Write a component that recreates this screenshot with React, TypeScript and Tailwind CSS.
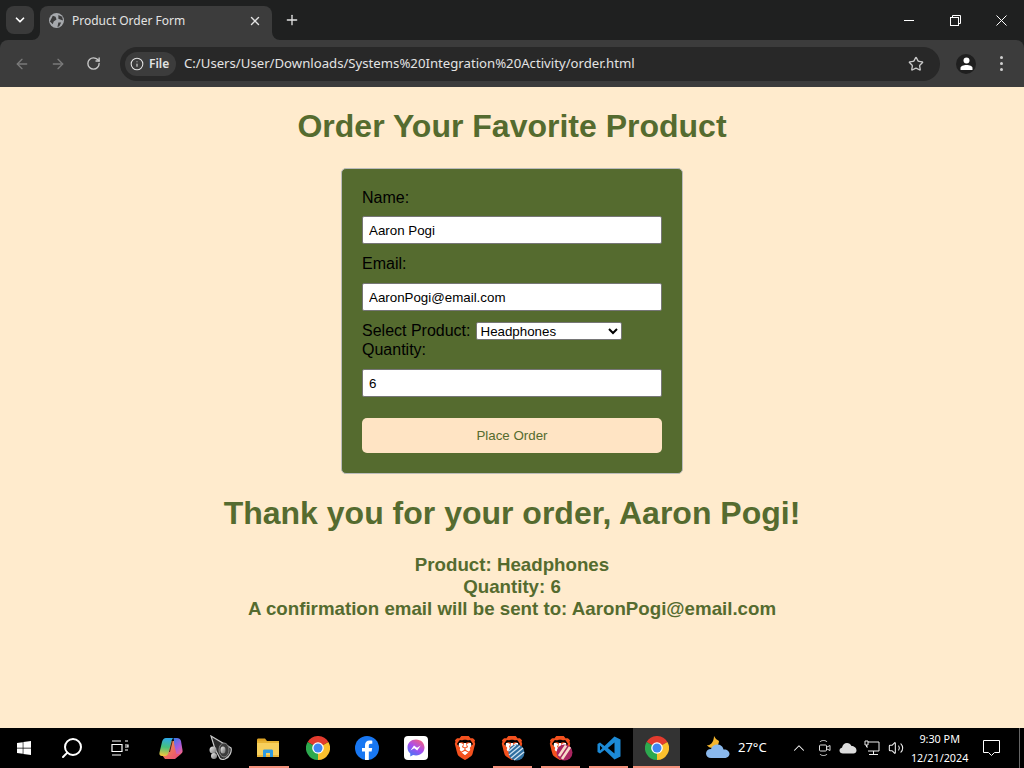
import React from "react";
import { SiBrave } from "react-icons/si";
import { FaWindows } from "react-icons/fa";
import { Star, ArrowLeft, ArrowRight, RotateCw, Info, ChevronDown, Plus, X, Search, ChevronUp, Volume2 } from "lucide-react";

function VSCode() {
  return (
    <svg width="24" height="24" viewBox="0 0 24 24">
      <path d="M17.500 0.500L23.500 3.500V20.500L17.500 23.500L7.500 14L3 17.500L0.500 16V8L3 6.500L7.500 10ZM17.500 6.500L10.800 12L17.500 17.500ZM3 9.500V14.500L5.500 12Z" fill="#1c8ad6" fillRule="evenodd" />
    </svg>
  );
}

function Chrome({ size = 24 }: { size?: number }) {
  return (
    <svg width={size} height={size} viewBox="0 0 24 24">
      <path d="M12 12L1.6 6A12 12 0 0 1 22.4 6Z" fill="#e33b2e" />
      <path d="M12 12L22.4 6A12 12 0 0 1 12 24Z" fill="#fbc02d" />
      <path d="M12 12L12 24A12 12 0 0 1 1.6 6Z" fill="#2da94f" />
      <circle cx="12" cy="12" r="5.8" fill="#fff" />
      <circle cx="12" cy="12" r="4.5" fill="#3f86f4" />
    </svg>
  );
}

function Brave({ badge }: { badge?: "blue" | "pink" }) {
  return (
    <div className="relative w-6 h-6">
      <svg viewBox="0 0 24 24" width="24" height="24" className="absolute inset-0">
        <path d="M6 7h12l1 7-7 7-7-7z" fill="#fff" />
      </svg>
      <SiBrave size={24} color="#f4511e" className="absolute inset-0" />
      {badge === "blue" && (
        <svg width="17" height="17" viewBox="0 0 17 17" className="absolute left-[8px] top-[8px]">
          <circle cx="8.5" cy="8.5" r="8" fill="#2f6f9f" />
          <path d="M1 7l7-6M1 11l11-9M3 14L15 4M6 16l10-8" stroke="#cfe3f2" strokeWidth="1.3" />
        </svg>
      )}
      {badge === "pink" && (
        <svg width="17" height="17" viewBox="0 0 17 17" className="absolute left-[8px] top-[8px]">
          <circle cx="8.5" cy="8.5" r="8" fill="#a8255f" />
          <path d="M3 12L10 1.5M6 15L14 3" stroke="#f6dbc8" strokeWidth="2.6" />
        </svg>
      )}
    </div>
  );
}

function Copilot() {
  return (
    <svg width="24" height="24" viewBox="0 0 24 24">
      <defs>
        <linearGradient id="cpa" x1="0.4" y1="0" x2="0.3" y2="1">
          <stop offset="0" stopColor="#2fa8e8" />
          <stop offset="0.5" stopColor="#46c07a" />
          <stop offset="1" stopColor="#f6c63c" />
        </linearGradient>
        <linearGradient id="cpb" x1="0.2" y1="0" x2="0.8" y2="1">
          <stop offset="0" stopColor="#3d7be8" />
          <stop offset="0.55" stopColor="#a65be0" />
          <stop offset="1" stopColor="#f0648c" />
        </linearGradient>
        <linearGradient id="cpc" x1="0" y1="0" x2="1" y2="1">
          <stop offset="0" stopColor="#f6a03c" />
          <stop offset="1" stopColor="#e8447c" />
        </linearGradient>
      </defs>
      <path d="M6 5H20L22 18L16 23H6L3 19Z" fill="url(#cpc)" />
      <path d="M7 2h7c-1 1.500-1.500 3-2 5l-2.500 9.500c-.5 2-1.500 3.500-3.500 3.500H3c-2 0-3-1.500-2.500-3.500L3 6C3.800 3.500 5 2 7 2z" fill="url(#cpa)" />
      <path d="M14 2h4c2 0 3.500 1 4 3l1.500 9c.5 2-.5 4-3 4h-3l-2-8c-.5-2-.5-6-1-8z" fill="url(#cpb)" />
      <path d="M13.500 4L10.500 16" stroke="#111" strokeWidth="0.8" />
    </svg>
  );
}

function Speaker() {
  return (
    <svg width="26" height="26" viewBox="0 0 26 26">
      <defs>
        <linearGradient id="spk" x1="0" y1="0" x2="1" y2="1">
          <stop offset="0" stopColor="#f0f0f0" />
          <stop offset="1" stopColor="#6e6e6e" />
        </linearGradient>
      </defs>
      <path d="M4 1l20 12c1 3-1 9-6 11-2 .7-4 .5-5-.5L8 14z" fill="#2b2b2b" stroke="#c9c9c9" strokeWidth="1.2" />
      <ellipse cx="17" cy="15" rx="5" ry="7" fill="#3c3c3c" stroke="#8a8a8a" />
      <ellipse cx="16" cy="15" rx="2.500" ry="3.500" fill="url(#spk)" />
      <circle cx="6" cy="15" r="3.500" fill="url(#spk)" />
      <circle cx="7" cy="21" r="3" fill="url(#spk)" />
    </svg>
  );
}

function Explorer() {
  return (
    <svg width="22" height="20" viewBox="0 0 22 20">
      <path d="M0 2c0-1 .5-1.500 1.500-1.500H8L10 3H0z" fill="#e0a526" />
      <rect x="0" y="3" width="22" height="15" rx="1" fill="#f7cf5c" />
      <rect x="0" y="3" width="22" height="2" fill="#e7b333" />
      <rect x="0" y="17" width="22" height="2" fill="#e9b53a" />
      <path d="M6 19v-6c0-1 .5-1.500 1.500-1.500h7c1 0 1.500.5 1.500 1.500v6h-3v-4H9v4z" fill="#2f9be0" />
    </svg>
  );
}

function Facebook() {
  return (
    <svg width="24" height="24" viewBox="0 0 24 24">
      <circle cx="12" cy="12" r="12" fill="#1877f2" />
      <path d="M16.600 15.500l.6-3.500h-3.400V9.700c0-1 .5-1.900 2-1.900h1.500v-3s-1.400-.2-2.700-.2c-2.800 0-4.600 1.700-4.600 4.700V12H7v3.500h3V24h3.800v-8.500z" fill="#fff" />
    </svg>
  );
}

function Messenger() {
  return (
    <svg width="24" height="24" viewBox="0 0 24 24">
      <defs>
        <linearGradient id="msg" x1="0.2" y1="1" x2="0.8" y2="0">
          <stop offset="0" stopColor="#3f7bf5" />
          <stop offset="0.5" stopColor="#a64df0" />
          <stop offset="1" stopColor="#f5607c" />
        </linearGradient>
      </defs>
      <rect x="0" y="0" width="24" height="24" rx="4" fill="#fff" />
      <path d="M12 3.500c-5 0-8.500 3.500-8.500 8 0 2.500 1 4.500 2.800 6v3l2.800-1.500c1 .3 1.900.4 2.900.4 5 0 8.500-3.500 8.500-7.900s-3.500-8-8.500-8z" fill="url(#msg)" />
      <path d="M6.500 14.500l3.500-5 3 2.300 3.700-2.300-3.500 5-3-2.300z" fill="#fff" />
    </svg>
  );
}

function Weather() {
  return (
    <svg width="26" height="26" viewBox="0 0 26 26">
      <path d="M9 1l2 3 3 2c0 3-2 6-5 7-3 .5-6-1-7-3 4 1 7-4 7-9z" fill="#f5b62e" />
      <path d="M6 23c-3 0-5-2-5-4.500S3 14 6 14c1-3 3.500-4.500 6-4.500 3.500 0 6 2 6.500 5 3-.5 6 1.500 6 4.300S22 23 19.500 23z" fill="#8ab8ec" />
    </svg>
  );
}

function Tab() {
  return (
    <div className="relative ml-[6px] w-[232px] h-[34px] bg-[#3c3c3c] rounded-t-[8px] flex items-center pl-[9px] pr-[10px] pb-[5px]">
      <svg width="8" height="8" viewBox="0 0 8 8" className="absolute -left-[8px] bottom-0">
        <path d="M0 8A8 8 0 0 0 8 0V8Z" fill="#3c3c3c" />
      </svg>
      <svg width="8" height="8" viewBox="0 0 8 8" className="absolute -right-[8px] bottom-0">
        <path d="M8 8A8 8 0 0 1 0 0V8Z" fill="#3c3c3c" />
      </svg>
      <svg width="15" height="15" viewBox="0 0 16 16" className="shrink-0">
        <circle cx="8" cy="8" r="8" fill="#a6a9ad" />
        <path d="M4 3l3 1 1 3-3 2-1 3-3-3zM10 2l4 2 1 4-3-1-2-1zM10 10l3 0-2 4-2 1z" fill="#3c3c3c" />
      </svg>
      <span className="ml-[8px] text-[12px] text-[#e3e3e3] font-['Noto_Sans',sans-serif] whitespace-nowrap">Product Order Form</span>
      <X size={14} strokeWidth={2.4} className="ml-auto text-[#e3e3e3]" />
    </div>
  );
}

function TitleBar() {
  return (
    <div className="h-[40px] bg-[#1f2020] flex items-end shrink-0">
      <div className="ml-[6px] mb-[6px] w-[28px] h-[28px] rounded-[8px] bg-[#3a3a3a] flex items-center justify-center">
        <ChevronDown size={14} strokeWidth={3} className="text-white" />
      </div>
      <Tab />
      <Plus size={16} strokeWidth={2} className="ml-[12px] mb-[12px] text-[#e3e3e3]" />
      <div className="ml-auto flex self-start text-white">
        <div className="w-[46px] h-[40px] flex items-center justify-center">
          <svg width="10" height="1" viewBox="0 0 10 1"><rect width="10" height="1" fill="#fff" /></svg>
        </div>
        <div className="w-[46px] h-[40px] flex items-center justify-center">
          <svg width="11" height="11" viewBox="0 0 11 11" fill="none" stroke="currentColor">
            <rect x="0.500" y="2.500" width="8" height="8" />
            <path d="M2.500 2.500V.5h8v8h-2" />
          </svg>
        </div>
        <div className="w-[46px] h-[40px] flex items-center justify-center">
          <svg width="11" height="11" viewBox="0 0 11 11" fill="none" stroke="#fff">
            <path d="M.5.5l10 10M10.500.5l-10 10" />
          </svg>
        </div>
      </div>
    </div>
  );
}

function Toolbar() {
  return (
    <div className="h-[47px] bg-[#3c3c3c] rounded-t-[8px] flex items-center shrink-0">
      <div className="flex items-center w-[120px] pl-[14px] gap-[20px]">
        <ArrowLeft size={16} className="text-[#7a7a7a]" />
        <ArrowRight size={16} className="text-[#7a7a7a]" />
        <RotateCw size={15} strokeWidth={2.2} className="text-[#c8c8c8]" />
      </div>
      <div className="w-[820px] h-[34px] rounded-full bg-[#282828] flex items-center pl-[5px] pr-[16px]">
        <div className="h-[24px] w-[51px] rounded-full bg-[#3c3c3c] flex items-center pl-[5px] gap-[5px] text-[#e3e3e3]">
          <Info size={14} strokeWidth={1.8} />
          <span className="text-[12px] font-semibold font-['Noto_Sans',sans-serif]">File</span>
        </div>
        <span className="ml-[8px] text-[13.18px] text-[#e3e3e3] font-['Noto_Sans',sans-serif] whitespace-nowrap">C:/Users/User/Downloads/Systems%20Integration%20Activity/order.html</span>
        <Star size={16} strokeWidth={2} className="ml-auto text-[#c8c8c8]" />
      </div>
      <div className="ml-[16px] w-[20px] h-[20px] rounded-full bg-[#1f1f1f] flex items-center justify-center">
        <svg width="13" height="13" viewBox="0 0 13 13" fill="#fff">
          <circle cx="6.500" cy="3.500" r="3" />
          <path d="M.5 13v-2c0-2 3-3 6-3s6 1 6 3v2z" />
        </svg>
      </div>
      <div className="ml-[24px] flex flex-col gap-[3px]">
        <span className="block w-[3px] h-[3px] rounded-full bg-[#d0d0d0]" />
        <span className="block w-[3px] h-[3px] rounded-full bg-[#d0d0d0]" />
        <span className="block w-[3px] h-[3px] rounded-full bg-[#d0d0d0]" />
      </div>
    </div>
  );
}

const inputCls = "block w-full h-[28px] mb-[11px] px-[6px] bg-white border border-[#767676] rounded-[2px] text-[13.33px] text-black outline-none";

function OrderForm() {
  return (
    <form className="w-[342px] mx-auto p-[20px] bg-[#556b2f] border border-[#bbb] rounded-[5px] text-[16px] leading-[18px] text-black">
      <div className="mb-[9px]">Name:</div>
      <input readOnly value="Aaron Pogi" className={inputCls} />
      <div className="mb-[10px]">Email:</div>
      <input readOnly value="AaronPogi@email.com" className={inputCls} />
      <div className="flex items-start h-[19px]">
        <span>Select Product:</span>
        <select defaultValue="Headphones" className="ml-[5px] w-[146px] h-[18px] bg-white border border-[#767676] rounded-[2px] text-[13.33px] leading-[15px] text-black">
          <option>Headphones</option>
        </select>
      </div>
      <div className="mb-[10px]">Quantity:</div>
      <input readOnly value="6" className={inputCls} />
      <button type="button" className="block w-full h-[35px] mt-[21px] rounded-[5px] bg-[#ffe4c4] text-[#556b2f] text-[13.33px]">Place Order</button>
    </form>
  );
}

function TaskIcon({ children, cls, line }: { children: React.ReactNode; cls: string; line?: string }) {
  return (
    <div className={"relative h-[40px] flex items-center justify-center shrink-0 " + cls}>
      {children}
      {line && <span className={"absolute bottom-0 h-[2px] bg-[#f4917c] " + line} />}
    </div>
  );
}

function Taskbar() {
  return (
    <div className="h-[40px] bg-black flex items-center shrink-0 text-white font-['Noto_Sans',sans-serif]">
      <TaskIcon cls="w-[48px]"><FaWindows size={16} /></TaskIcon>
      <TaskIcon cls="w-[48px]"><Search size={24} strokeWidth={2} className="-scale-x-100" /></TaskIcon>
      <TaskIcon cls="w-[48px]">
        <svg width="18" height="16" viewBox="0 0 18 16" fill="none" stroke="#fff" strokeWidth="1.200">
          <path d="M1 1h9M1 15h9M1 4.500h10v7H1zM14 1h3M14 5h3v2h-3M14 10h3" />
        </svg>
      </TaskIcon>
      <TaskIcon cls="w-[48px] ml-[3px]"><Copilot /></TaskIcon>
      <TaskIcon cls="w-[49px]"><Speaker /></TaskIcon>
      <TaskIcon cls="w-[48px]" line="left-[5px] w-[40px]"><Explorer /></TaskIcon>
      <TaskIcon cls="w-[48px] ml-[2px]"><Chrome /></TaskIcon>
      <TaskIcon cls="w-[49px]"><Facebook /></TaskIcon>
      <TaskIcon cls="w-[50px]"><Messenger /></TaskIcon>
      <TaskIcon cls="w-[47px]"><Brave /></TaskIcon>
      <TaskIcon cls="w-[48px]" line="left-[5px] w-[39px]"><Brave badge="blue" /></TaskIcon>
      <TaskIcon cls="w-[48px]" line="left-[5px] w-[39px]"><Brave badge="pink" /></TaskIcon>
      <TaskIcon cls="w-[49px]" line="left-[5px] w-[39px]"><VSCode /></TaskIcon>
      <TaskIcon cls="w-[47px] bg-[#333333]" line="left-0 w-full"><Chrome /></TaskIcon>
      <div className="ml-[25px] flex items-center">
        <Weather />
        <span className="ml-[7px] text-[13px]">27°C</span>
      </div>
      <ChevronUp size={18} strokeWidth={1.4} className="ml-[23px]" />
      <svg width="14" height="18" viewBox="0 0 14 18" fill="none" stroke="#ddd" className="ml-[10px]">
        <path d="M2 3c1-2 6-2 7 0M2 15c1 2 6 2 7 0" />
        <rect x="1.500" y="6" width="7" height="6" rx="1" />
        <path d="M9 8l3-1.500v5L9 10" />
      </svg>
      <svg width="18" height="12" viewBox="0 0 18 12" fill="#ddd" className="ml-[7px]">
        <path d="M4 11.500c-2 0-3.500-1-3.500-3 0-1.500 1-2.500 2.500-2.800C3.500 3 5.500 1 8 1c2 0 3.500 1 4.500 3 2.500 0 5 1.500 5 4.500 0 2-1.500 3-3 3z" />
      </svg>
      <svg width="16" height="16" viewBox="0 0 16 16" fill="none" stroke="#eee" className="ml-[7px]">
        <path d="M4 2h11v9H4M1 1h3v4H1zM2.500 5v2H4M9.500 11v3M5 14.500h9" />
      </svg>
      <Volume2 size={16} strokeWidth={1.6} className="ml-[8px] text-[#eee]" />
      <div className="ml-[2px] w-[68px] flex flex-col items-center text-[10.8px] leading-[19px]">
        <span>9:30 PM</span>
        <span className="whitespace-nowrap">12/21/2024</span>
      </div>
      <svg width="17" height="16" viewBox="0 0 17 16" fill="none" stroke="#fff" className="ml-[9px]">
        <path d="M.5.5h16v12h-5l-3 3-3-3h-5z" />
      </svg>
      <span className="ml-[19px] h-[40px] w-[1px] bg-[#666]" />
    </div>
  );
}

export default function App() {
  return (
    <div className="w-[1024px] h-[768px] flex flex-col overflow-hidden bg-[#1f2020]">
      <TitleBar />
      <Toolbar />
      <main className="flex-1 bg-[#ffebcd] font-['Liberation_Sans',Arial,sans-serif] text-center text-[#556b2f]">
        <h1 className="mt-[21px] mb-[23px] text-[32px] leading-[37px] font-bold">Order Your Favorite Product</h1>
        <div className="text-left"><OrderForm /></div>
        <h2 className="mt-[21px] mb-[22px] text-[32px] leading-[37px] font-bold">Thank you for your order, Aaron Pogi!</h2>
        <p className="text-[18.72px] leading-[22px] font-bold">Product: Headphones</p>
        <p className="text-[18.72px] leading-[22px] font-bold">Quantity: 6</p>
        <p className="text-[18.72px] leading-[22px] font-bold">A confirmation email will be sent to: AaronPogi@email.com</p>
      </main>
      <Taskbar />
    </div>
  );
}
